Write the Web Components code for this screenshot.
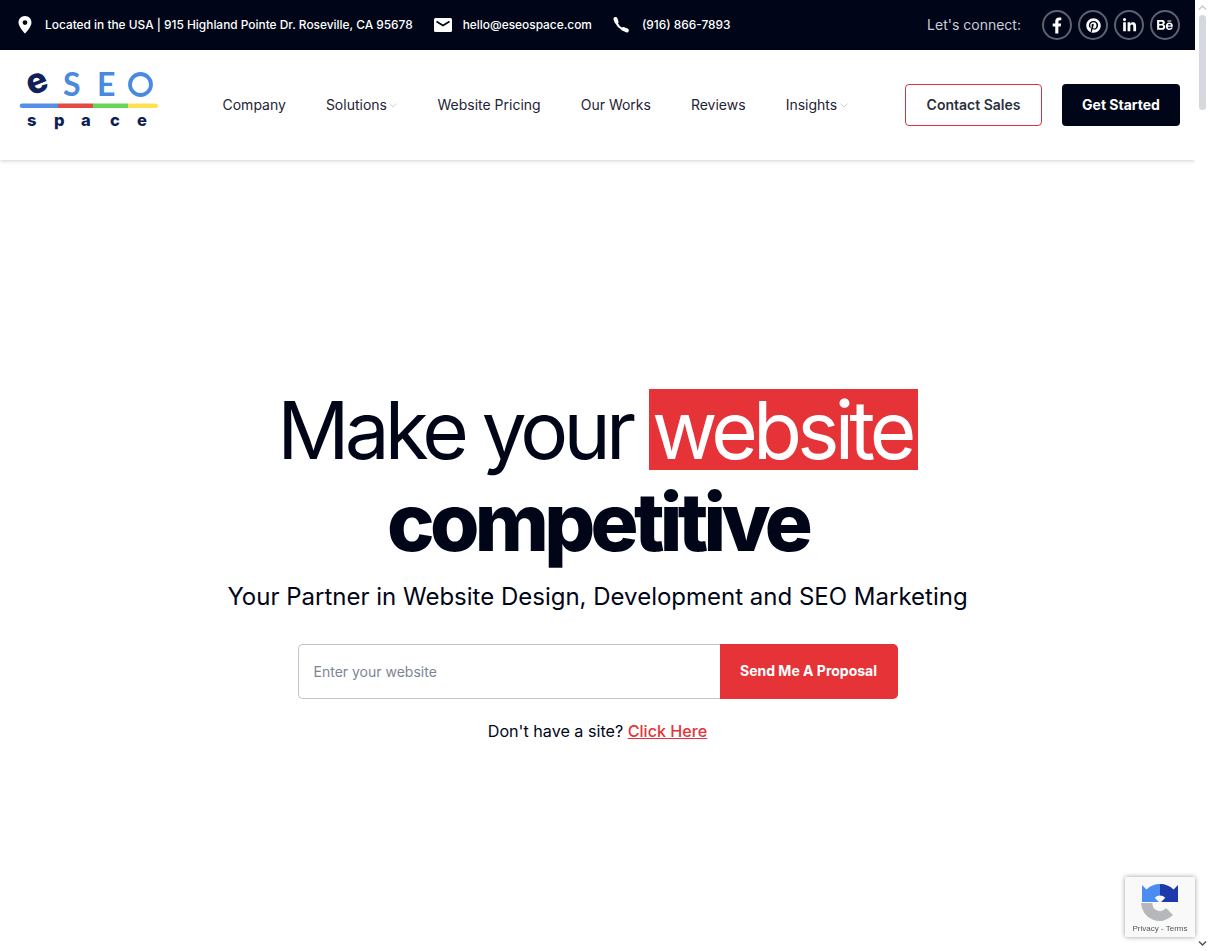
<!DOCTYPE html>
<html lang="en"><head><meta charset="utf-8"><title>eSEO Space</title>
<style>
html,body{margin:0;padding:0;height:951px;overflow:hidden;background:#fff;font-family:Inter,"Liberation Sans",sans-serif}
body{display:flex}
</style></head><body>
<site-page>
<top-bar></top-bar>
<main-header></main-header>
<hero-section></hero-section>
</site-page>
<fake-scrollbar></fake-scrollbar>
<recaptcha-badge></recaptcha-badge>
<script>
const def=(n,html)=>customElements.define(n,class extends HTMLElement{constructor(){super();this.attachShadow({mode:'open'}).innerHTML=html}});
def('site-page',`<style>:host{display:flex;flex-direction:column;width:1195px;height:951px;flex:none;overflow:hidden}</style><slot></slot>`);
def('contact-item',`<style>:host{display:flex;align-items:center;gap:var(--g,12px);color:#fff;font:500 11.9px/20px Inter,sans-serif;white-space:nowrap}
::slotted(svg){display:block;flex:none}</style><slot name="i"></slot><span><slot></slot></span>`);
def('social-icon',`<style>:host{display:flex;align-items:center;justify-content:center;box-sizing:border-box;width:30px;height:30px;border:2px solid #5f626e;border-radius:50%;color:#fff}::slotted(*){display:block}</style><slot></slot>`);
def('top-bar',`<style>:host{display:flex;align-items:center;height:50px;background:#000618;padding:0 15px 0 17px;box-sizing:border-box;flex:none}
.l{display:flex;gap:21px;align-items:center}.r{margin-left:auto;display:flex;align-items:center;gap:6px}
.lc{color:#c9ccd6;font:400 14px/20px Inter,sans-serif;margin-right:15px}
</style>
<div class="l">
<contact-item style="--g:12px"><svg slot="i" width="16" height="20" viewBox="0 0 16 20"><path fill="#fff" fill-rule="evenodd" d="M8 1C4.200 1 1.500 3.900 1.500 7.500 1.500 12 8 18.500 8 18.500S14.500 12 14.500 7.500C14.500 3.900 11.800 1 8 1Zm0 4.200a2.400 2.400 0 1 1 0 4.800 2.400 2.400 0 0 1 0-4.800Z"/></svg>Located in the USA | 915 Highland Pointe Dr. Roseville, CA 95678</contact-item>
<contact-item style="--g:11px"><svg slot="i" width="18" height="14" viewBox="0 0 18 14"><rect width="18" height="14" rx="1.500" fill="#fff"/><path d="M2.500 3.500 9 7.500 15.500 3.500" fill="none" stroke="#000618" stroke-width="1.700"/></svg>hello@eseospace.com</contact-item>
<contact-item style="--g:13px"><svg slot="i" width="16" height="16" viewBox="0 0 16 16"><g fill="none" stroke="#fff" stroke-linecap="round"><path d="M3 3C3.500 8 7 12 13 13" stroke-width="2.200"/><path d="M2.500 2 3.500 4.800" stroke-width="4"/><path d="M10.500 12 13.800 13.400" stroke-width="4"/></g></svg>(916) 866-7893</contact-item>
</div>
<div class="r"><span class="lc">Let's connect:</span>
<social-icon><svg width="10" height="17" viewBox="0 0 320 512"><path fill="#fff" d="M279 288l14-93h-89v-60c0-25 12-50 52-50h41V6s-37-6-72-6C151 0 104 44 104 124v71H23v93h81v224h100V288z"/></svg></social-icon>
<social-icon><svg width="15" height="15" viewBox="0 0 496 512"><path fill="#fff" d="M496 256c0 137-111 248-248 248-25.600 0-50.200-3.900-73.400-11.100 10.100-16.500 25.200-43.500 30.800-65 3-11.600 15.400-59 15.400-59 8.100 15.400 31.700 28.500 56.800 28.500 74.800 0 128.700-68.800 128.700-154.300 0-81.900-66.900-143.200-152.900-143.200-107 0-163.900 71.800-163.900 150.100 0 36.400 19.400 81.700 50.300 96.100 4.700 2.200 7.200 1.200 8.300-3.300.8-3.400 5-20.300 6.900-28.100.6-2.500.3-4.700-1.700-7.100-10.100-12.500-18.300-35.300-18.300-56.600 0-54.700 41.400-107.600 112-107.600 60.900 0 103.600 41.500 103.600 100.900 0 67.100-33.900 113.600-78 113.600-24.300 0-42.600-20.100-36.700-44.800 7-29.500 20.500-61.300 20.500-82.600 0-19-10.200-34.900-31.400-34.900-24.900 0-44.900 25.700-44.900 60.200 0 22 7.400 36.800 7.400 36.800s-24.500 103.800-29 123.200c-5 21.400-3 51.600-.9 71.200C65.400 450.900 0 361.100 0 256 0 119 111 8 248 8s248 111 248 248z"/></svg></social-icon>
<social-icon><svg width="15" height="15" viewBox="0 0 448 512"><path fill="#fff" d="M100.300 448H7.400V148.900h92.900zM53.800 108.100C24.100 108.100 0 83.500 0 53.800a53.800 53.800 0 0 1 107.600 0c0 29.700-24.100 54.300-53.800 54.300zM447.900 448h-92.700V302.400c0-34.700-.7-79.200-48.300-79.200-48.300 0-55.700 37.700-55.700 76.700V448h-92.800V148.900h89.100v40.800h1.300c12.400-23.500 42.700-48.300 87.900-48.300 94 0 111.300 61.900 111.300 142.300V448z"/></svg></social-icon>
<social-icon><svg width="18" height="14" viewBox="0 0 576 512"><path fill="#fff" d="M232 237.200c31.800-15.200 48.400-38.200 48.400-74 0-70.600-52.600-87.800-113.300-87.800H0v354.400h171.800c64.400 0 124.900-30.900 124.900-102.900 0-44.500-21.100-77.400-64.700-89.700zM77.900 135.900H151c28.100 0 53.400 7.900 53.400 40.500 0 30.100-19.700 42.200-47.500 42.200h-79v-82.700zm83.300 233.700H77.900V272h84.900c34.300 0 56 14.300 56 50.600 0 35.800-25.900 47-57.600 47zm358.500-240.700H376V94h143.700v34.900zM576 305.200c0-75.900-44.400-139.200-124.900-139.200-78.200 0-131.300 58.800-131.300 135.800 0 79.900 50.300 134.700 131.300 134.700 61.300 0 101-27.600 120.100-86.300H509c-6.700 21.900-34.300 33.500-55.700 33.500-41.300 0-63-24.200-63-65.300h185.100c.3-4.200.6-8.700.6-13.200zM390.400 274c2.300-33.700 24.700-54.800 58.500-54.800 35.400 0 53.200 20.800 56.200 54.800H390.400z"/></svg></social-icon>
</div>`);
def('nav-item',`<style>:host{display:flex;align-items:center;color:#1e2435;font:400 14px/20px Inter,sans-serif;white-space:nowrap}
svg{display:none;margin-left:2.500px}:host([dd]) svg{display:block}</style><slot></slot><svg width="8" height="5" viewBox="0 0 8 5"><path d="M.5.7 4 4 7.500.7" fill="none" stroke="#c9ccd2" stroke-width=".9"/></svg>`);
def('site-logo',`<style>:host{display:block;width:140px;height:110px;flex:none}svg{display:block}</style>
<svg width="140" height="110" viewBox="0 -20 140 110">
<text x="12" y="26" rotate="-22" font-size="35" font-weight="800" fill="#0f2157" style="font-family:Inter,sans-serif">e</text>
<text x="44" y="26" font-size="32" font-weight="700" fill="#4a8ade" style="font-family:Lato,sans-serif">S</text>
<text x="78" y="26" font-size="32" font-weight="700" fill="#4a8ade" style="font-family:Lato,sans-serif">E</text>
<circle cx="121.500" cy="14.500" r="10.500" fill="none" stroke="#4a8ade" stroke-width="3.800"/>
<path d="M3 33.500h36v4.500H3a2.250 2.250 0 0 1 0-4.500Z" fill="#5490e6"/><rect x="39" y="33.500" width="35" height="4.500" fill="#e44a41"/><rect x="74" y="33.500" width="35" height="4.500" fill="#66d655"/><path d="M109 33.500h27.700a2.250 2.250 0 0 1 0 4.500H109Z" fill="#fbe254"/>
<g font-size="16.500" font-weight="800" fill="#0f1f57" style="font-family:Inter,sans-serif">
<text x="8" y="56">s</text><text x="35" y="56">p</text><text x="62" y="56">a</text><text x="91" y="56">c</text><text x="118" y="56">e</text></g>
</svg>`);
def('action-btn',`<style>:host{display:flex;align-items:center;justify-content:center;box-sizing:border-box;height:42px;border-radius:4px;font:600 14px/20px Inter,sans-serif;white-space:nowrap}
:host([k=o]){width:137px;border:1px solid #d8343f;color:#2b3040}:host([k=d]){width:118px;background:#000618;color:#fff;font-weight:700}</style><slot></slot>`);
def('main-header',`<style>:host{display:flex;align-items:center;height:110px;flex:none;box-sizing:border-box;padding:0 15px 0 19px;background:#fff;box-shadow:0 1px 4px rgba(0,0,0,.18);position:relative}
nav{display:flex;gap:40px;margin-left:63.500px}
.a{margin-left:auto;display:flex;gap:20px}</style>
<site-logo></site-logo>
<nav><nav-item>Company</nav-item><nav-item dd>Solutions</nav-item><nav-item>Website Pricing</nav-item><nav-item>Our Works</nav-item><nav-item>Reviews</nav-item><nav-item dd>Insights</nav-item></nav>
<div class="a"><action-btn k="o">Contact Sales</action-btn><action-btn k="d">Get Started</action-btn></div>`);
def('proposal-form',`<style>:host{display:flex;width:600px;height:55px;flex:none}
.i{flex:1;box-sizing:border-box;border:1px solid #bfc4cc;border-right:0;border-radius:5px 0 0 5px;padding:0 15px;display:flex;align-items:center;color:#7d8594;font:400 14px/20px Inter,sans-serif}
.b{width:178px;background:#e53338;border-radius:0 5px 5px 0;color:#fff;font:700 14px/20px Inter,sans-serif;display:flex;align-items:center;justify-content:center;padding-bottom:2px;box-sizing:border-box}</style>
<div class="i">Enter your website</div><div class="b">Send Me A Proposal</div>`);
def('hero-section',`<style>:host{display:flex;flex-direction:column;align-items:center;padding-top:224px;color:#000618;font-family:Inter,sans-serif}
h1{margin:0;font-size:80px;font-weight:400;letter-spacing:-4.800px;line-height:92px;text-align:center;white-space:nowrap;color:#000618}
.m{display:inline-block;background:#e53338;color:#fff;line-height:81px;height:81px;padding:0 6px 0 3px;vertical-align:baseline}
strong{font-weight:800;letter-spacing:-4.700px;display:block}
p{margin:0}.s{font-size:24px;line-height:34px;margin:12px 0 30px}
.d{font-size:16.150px;line-height:24px;margin-top:20px}a{color:#e53338;font-weight:500;text-decoration:underline}</style>
<h1>Make your <span class="m">website</span><strong>competitive</strong></h1>
<p class="s">Your Partner in Website Design, Development and SEO Marketing</p>
<proposal-form></proposal-form>
<p class="d">Don't have a site? <a>Click Here</a></p>`);
def('fake-scrollbar',`<style>:host{display:flex;flex-direction:column;align-items:center;width:15px;height:951px;flex:none;background:#fff}
.t{width:7px;height:95px;background:#d5d8de;border-radius:4px;margin-top:5px}svg{display:block;flex:none;margin-top:5px}.g{flex:1}</style>
<svg width="9" height="5" viewBox="0 0 9 5"><path d="M1 4.500 4.500 1 8 4.500" fill="none" stroke="#c8cbd0" stroke-width="1.500"/></svg><div class="t"></div><div class="g"></div><svg style="margin:0 0 5px" width="9" height="5" viewBox="0 0 9 5"><path d="M1 .5 4.500 4 8 .5" fill="none" stroke="#555" stroke-width="1.500"/></svg>`);
def('recaptcha-badge',`<style>:host{position:fixed;left:1125px;top:877px;width:70px;height:60px;background:#f9f9f9;box-shadow:0 0 5px rgba(0,0,0,.4);border-radius:2px 0 0 2px;overflow:hidden;display:block}
svg{position:absolute;left:15px;top:6px}span{position:absolute;left:0;right:0;bottom:3px;text-align:center;font:400 8px/10px "Liberation Sans",sans-serif;color:#555}</style>
<svg width="40" height="40" viewBox="0 0 40 40">
<path d="M1 20H12.500A7.500 7.500 0 0 0 26 25L33 32A18.500 18.500 0 0 1 1 20Z" fill="#b5b7ba"/>
<path d="M20 1A19 19 0 0 0 6.500 6.500L2 2V19H19L14.700 14.700A7.500 7.500 0 0 1 20 12.500Z" fill="#4a8df0"/>
<path d="M20 1A19 19 0 0 1 33.500 6.500L38 2V19H21L25.300 14.700A7.500 7.500 0 0 0 20 12.500Z" fill="#1c3aa9"/>
</svg><span>Privacy - Terms</span>`);
</script>
</body></html>
